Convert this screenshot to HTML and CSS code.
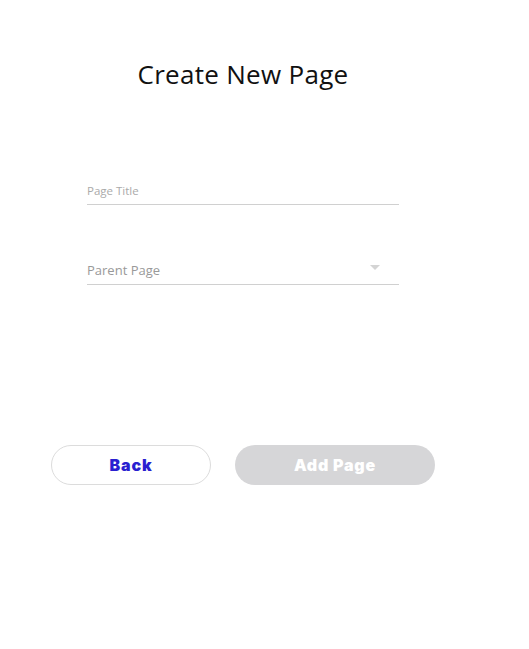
FILE: index.html
```html
<!DOCTYPE html>
<html lang="en">

<head>
  <meta charset="UTF-8">
  <meta name="viewport" content="width=device-width, initial-scale=1.0">
  <title>Create New Page</title>
  <link rel="stylesheet" href="styles.css">
</head>

<body>
  <div class="page">
    <h1 class="title">Create New Page</h1>
    <form class="form">
      <div class="field">
        <input class="input" type="text" placeholder="Page Title">
      </div>
      <div class="field select-field">
        <span class="select-label">Parent Page</span>
        <span class="caret"></span>
      </div>
    </form>
    <div class="actions">
      <button type="button" class="btn btn-back">Back</button>
      <button type="button" class="btn btn-add" disabled>Add Page</button>
    </div>
  </div>
</body>

</html>
```

FILE: styles.css
```css
body {
  margin: 0;
  background: #fff;
  font-family: "Open Sans", Arial, sans-serif;
}

.page {
  width: 486px;
  display: flex;
  flex-direction: column;
  align-items: center;
}

.title {
  margin: 58px 0 0;
  font-size: 26px;
  line-height: 32px;
  font-weight: 400;
  color: #111;
  letter-spacing: 0.3px;
}

.form {
  width: 312px;
  margin-top: 85px;
  display: flex;
  flex-direction: column;
  gap: 50px;
}

.field {
  height: 30px;
  box-sizing: border-box;
  padding-bottom: 6px;
  border-bottom: 1px solid #d0d0d0;
  display: flex;
  align-items: flex-end;
}

.input {
  border: none;
  outline: none;
  padding: 0;
  width: 100%;
  font-family: inherit;
  font-size: 11.5px;
  background: transparent;
}

.input::placeholder {
  color: #aaa;
}

.select-field {
  justify-content: space-between;
  padding-bottom: 5px;
}

.select-label {
  font-size: 13px;
  color: #999;
}

.caret {
  width: 0;
  height: 0;
  border-left: 5px solid transparent;
  border-right: 5px solid transparent;
  border-top: 5px solid #d4d4d4;
  margin-right: 19px;
  margin-bottom: 9px;
}

.actions {
  margin-top: 160px;
  display: flex;
  gap: 24px;
}

.btn {
  height: 40px;
  border-radius: 20px;
  font-family: Inter, Arial, sans-serif;
  font-size: 16px;
  font-weight: 900;
  letter-spacing: 0.8px;
}

.btn-back {
  width: 160px;
  background: #fff;
  border: 1px solid #dcdcdc;
  color: #2a1fd0;
}

.btn-add {
  width: 200px;
  background: #d6d6d8;
  border: none;
  color: #fff;
}
```
